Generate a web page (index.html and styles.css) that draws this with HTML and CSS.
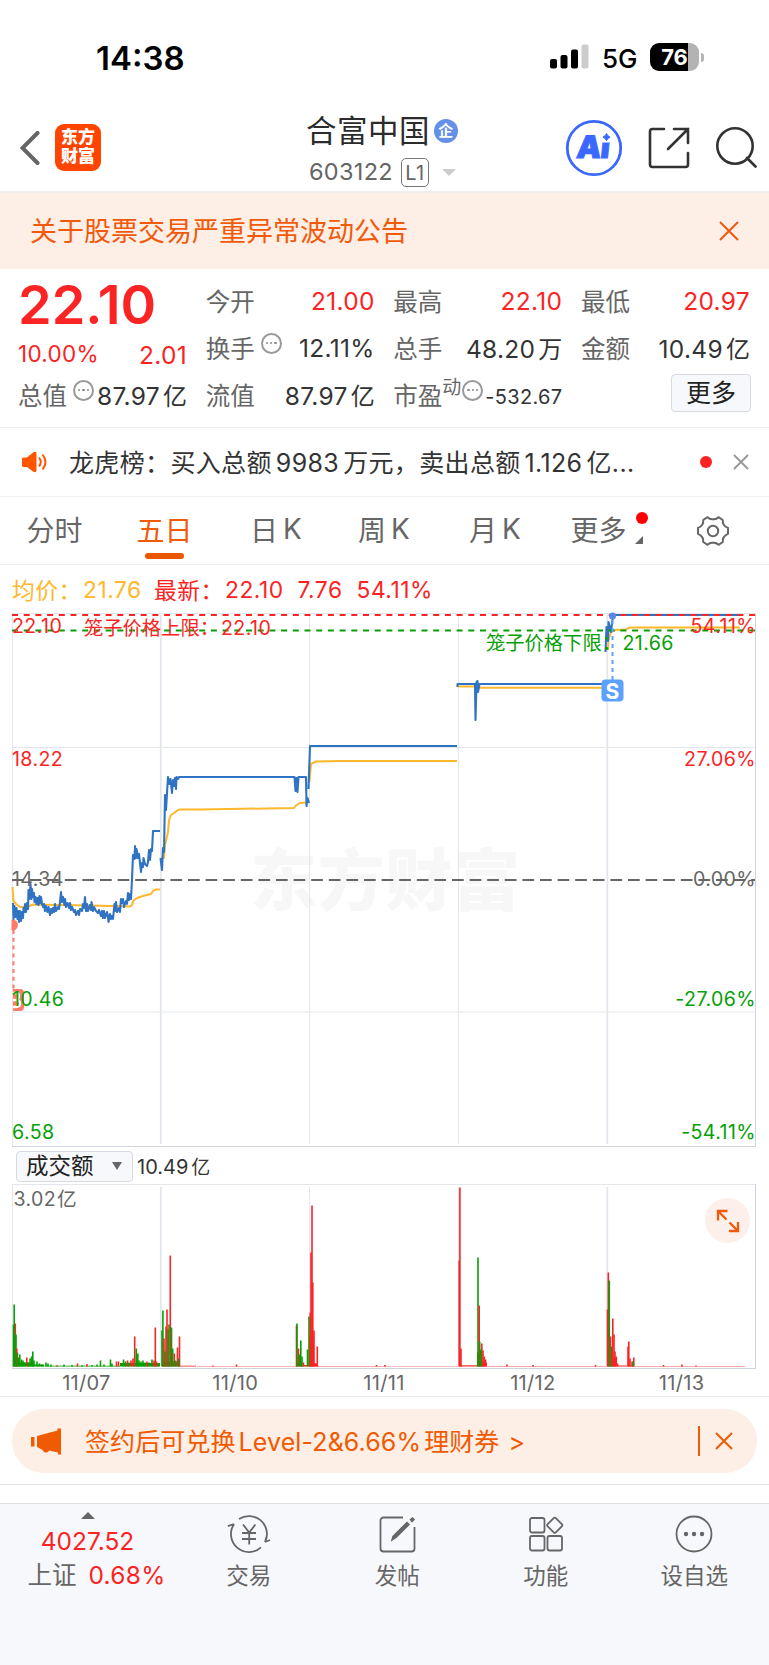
FILE: index.html
```
<!DOCTYPE html>
<html lang="zh-CN">
<head>
    <meta charset="UTF-8">
    <meta name="viewport" content="width=device-width, initial-scale=1.0">
    <title>合富中国 603122</title>
    <link rel="stylesheet" href="styles.css">
</head>
<body>

    <div class="statusbar">
        <span class="time">14:38</span>
        <svg class="signal" width="39" height="26" viewBox="0 0 39 26">
            <rect x="0" y="15" width="7" height="9.5" rx="2"/>
            <rect x="10.5" y="11" width="7" height="13.5" rx="2"/>
            <rect x="21" y="5.500" width="7" height="19" rx="2"/>
            <rect x="31.500" y="0.500" width="7" height="24" rx="2" fill="#ccc"/>
        </svg>
        <span class="network">5G</span>
        <div class="battery"><span>76</span></div>
        <i class="battery-tip"></i>
    </div>

    <header class="header">
        <div class="header-left">
            <svg width="20" height="34" viewBox="0 0 20 34"><path d="M17.500 2 2.500 17l15 15" fill="none" stroke="#666" stroke-width="4" stroke-linecap="round"/></svg>
            <div class="logo">东方<br>财富</div>
        </div>
        <div class="title">
            <div class="name">合富中国<span class="corp">企</span></div>
            <div class="code">603122<span class="level">L1</span><i class="caret"></i></div>
        </div>
        <div class="header-right">
            <svg class="ai" width="58" height="58" viewBox="0 0 58 58">
                <circle cx="29" cy="29" r="26.700" fill="#fff" stroke="#3a68ff" stroke-width="2.800"/>
                <text x="15" y="39.500" textLength="33" transform="skewX(-6)">Ai</text>
                <rect x="35.500" y="12" width="12" height="11.500" fill="#fff"/>
                <path d="M41.500 14.500q1 2.600 3.600 3.600-2.600 1-3.600 3.600-1-2.600-3.600-3.600 2.600-1 3.600-3.600z" fill="#3a68ff" stroke="#3a68ff"/>
            </svg>
            <svg class="share" width="42" height="42" viewBox="0 0 42 42">
                <path d="M16 2H4.500A2.500 2.500 0 0 0 2 4.500v33A2.500 2.500 0 0 0 4.500 40h33a2.500 2.500 0 0 0 2.500-2.500V26M26 2h14v14M40 2 20 22"/>
            </svg>
            <svg class="search" width="42" height="42" viewBox="0 0 42 42">
                <circle cx="20" cy="19" r="17.700"/><path d="m32 31 8.500 8.500"/>
            </svg>
        </div>
    </header>

    <div class="notice">
        <span>关于股票交易严重异常波动公告</span>
        <svg width="20" height="20" viewBox="0 0 20 20"><path d="m1 1 18 18M19 1 1 19" stroke="#f05a0a" stroke-width="2"/></svg>
    </div>

    <section class="quote">
        <div class="col first">
            <div class="price">22.10</div>
            <div class="change"><span>10.00%</span><span class="diff">2.01</span></div>
            <div class="item"><label>总值<i class="more-dot"><b></b><b></b><b></b></i></label><span>87.97<em>亿</em></span></div>
        </div>
        <div class="col">
            <div class="item up"><label>今开</label><span>21.00</span></div>
            <div class="item"><label>换手<i class="more-dot"><b></b><b></b><b></b></i></label><span>12.11%</span></div>
            <div class="item"><label>流值</label><span>87.97<em>亿</em></span></div>
        </div>
        <div class="col">
            <div class="item up"><label>最高</label><span>22.10</span></div>
            <div class="item"><label>总手</label><span>48.20<em>万</em></span></div>
            <div class="item"><label>市盈<sup>动</sup><i class="more-dot tight"><b></b><b></b><b></b></i></label><span class="small">-532.67</span></div>
        </div>
        <div class="col">
            <div class="item up"><label>最低</label><span>20.97</span></div>
            <div class="item"><label>金额</label><span>10.49<em>亿</em></span></div>
            <div class="item end"><button class="btn-more">更多</button></div>
        </div>
    </section>

    <div class="news">
        <svg width="27" height="24" viewBox="0 0 27 24">
            <path d="M2.500 7.500H6l6-5q3.500-2 3.500 1.500v16q0 3.500-3.500 1.500l-6-4.500H2.500Q1 17 1 15.500V9q0-1.500 1.500-1.500z" fill="#ff5500"/>
            <path d="M18 7.500q3.500 4.500 0 9M21.500 4.500q6 7.500 0 15" fill="none" stroke="#ff5500" stroke-width="2"/>
        </svg>
        <p>龙虎榜：买入总额<span>9983</span>万元，卖出总额<span>1.126</span>亿...</p>
        <i class="dot"></i>
        <svg width="16" height="16" viewBox="0 0 16 16"><path d="m1 1 14 14M15 1 1 15" stroke="#999" stroke-width="2"/></svg>
    </div>

    <nav class="tabs">
        <a>分时</a>
        <a class="active">五日</a>
        <a>日<span>K</span></a>
        <a>周<span>K</span></a>
        <a>月<span>K</span></a>
        <a class="tab-more">更多<i class="badge"></i><i class="corner"></i></a>
        <a>
            <svg width="32" height="32" viewBox="0 0 32 32" fill="none" stroke="#666" stroke-width="2">
                <path d="M10.500 2.200Q13 4.700 16 4.200 19 4.700 21.500 2.200L25.800 5Q25 10.500 31 13V18.800Q25 21.500 25.800 27L21.500 29.800Q19 27.300 16 27.800 13 27.300 10.500 29.800L6.200 27Q7 21.500 1 18.800V13Q7 10.500 6.200 5Z" stroke-linejoin="round"/>
                <circle cx="16" cy="16" r="5.200"/>
            </svg>
        </a>
    </nav>

    <div class="legend">
        <span class="avg">均价：</span><span class="avg avg-val">21.76</span>
        <span class="last">最新：</span><span class="last-val">22.10</span><span class="delta">7.76</span><span>54.11%</span>
    </div>

    <svg class="chart" width="769" height="536" viewBox="0 612 769 536">
        <text class="watermark" x="250" y="905" textLength="270">东方财富</text>
        <!-- grid -->
        <g class="grid">
            <path d="M12 613.500H756M12 747.500H755M12 1012H755M12.500 613V1147M309.500 615V1144M458.500 615V1144"/>
            <path d="M160.800 615V1144M607.300 615V1144" stroke-width="1.800"/>
            <path d="M12 1146.500H756M755.500 613V1147" stroke="#d2d5de"/>
        </g>
        <!-- buy marker -->
        <g>
            <path d="M13.500 930V990" stroke="#ff7b69" stroke-width="2" stroke-dasharray="4 3.800"/>
            <path d="M12.500 920.500a4.500 4.500 0 0 1 0 9z" fill="#ff7b69" stroke="#ff7b69" stroke-width="2"/>
            <path d="M13 989h7a4 4 0 0 1 4 4v14a4 4 0 0 1-4 4h-7z" fill="#ff7b69"/>
            <path d="M13 993h3q3 0 3 3.200T16 1000h-3m3 0q4 0 4 3.500t-4 3.500h-3" fill="none" stroke="#fff" stroke-width="2.300"/>
        </g>
        <path class="avg-line" d="M12.500 887 13.500 901 16 904 20 907H27L33 904.500 60 905 90 905.500 110 906 130 906.500 131.500 905.500 134 900 137 898 143 896 151 894 153.500 890.500 156 889.500H160M161 858 164 858 165 845 168 832 169 820 171 815 176 811.500 179 809.500H200L294 808 296 805.500 300 803 306 802.500M309.500 782 311 764 316 761.500 340 761H457M458 686.500H475L479 687.800H606M608 650 608.500 640 611 632 616 629.800H625L630 627.500H740"/>
        <path class="price-line" d="M13 903 13.500 919 14.500 906 15.500 917 16.500 908 17.500 919 18.500 911 19 922 20 911 21 921 22 912 23 918 23.500 908 24.500 912 25 904 26 912 27 903 28 909 28.500 890 29.500 899 30.500 884 31.500 899 32 889 33 897 34 893 34.500 902 35.500 897 36.500 904 37.500 898 38.500 905 39.500 896 40.500 903 41 897 42 904 43 907 44 904 45 911 46 906 47.500 912 48.500 907 50 915 51 909 52 913 53 908 54 912 55 904 56 911 58 907 59 909 60 902 61 892 62 902 63 897 64.500 905 65 899 66 907 67.500 903 69 908 70 903 71 910 72 907 74 912 75 910 76 915 78 911 79 915 80 909 82 911 83 904 84 908 85 897 86 911 87 904 88 911 90 905 91 910 91.500 902 93 911 94 907 96 911 98 913 99 910 101 916 102 911 103 918 104 911 105 918 107 912 108 917 108.500 922 110 914 111 919 112 916 113 919 114.500 904 115 911 116 902 117 912 119 908 120 912 121 899 122 903 123 899 124 907 126 901 127 904 128 893 129 900 130 894 131 899 132 879 133 855 134.500 859 135 846 136 858 136.500 849 138 858 139 854 141 872 142 863 143 867 143.500 858 145 864 147 866 148 862 149 850 150 860 151 849 152 851 153 831H160M160.500 858 162 870 163 848 164 852 165 795 166 810 167 793 168 777 169.500 784 170.500 779 172 793 173 780 174 786 175 778 176 789 176.500 777 178 779 179 777H294.500L295.500 791 296.500 778 297.500 792 298.500 777H306L306.500 806 307.500 798 309 803M308.500 789 310 746H457M457.500 687V684H475L475.500 720 476.500 682 477.500 681 478 692 479.500 684H606M605.500 652 606.500 627 608 641 608.500 622 611 632 613 615H740"/>
        <path d="M12 615H755" class="limit-up"/>
        <path d="M12 630.500H755" class="limit-down"/>
        <path d="M12 880H755" class="zero"/>
        <!-- sell marker -->
        <path d="M612.500 620V680" stroke="#5da1ff" stroke-width="2" stroke-dasharray="4 4"/>
        <circle cx="612.500" cy="616" r="3.500" fill="#5d86e8"/>
        <rect x="601.500" y="679.500" width="22" height="22" rx="4" fill="#5da1ff"/>
        <text class="sell" x="612.500" y="698.500">S</text>
        <g class="red">
            <text x="12" y="632.500">22.10</text>
            <text x="12" y="766">18.22</text>
            <text class="cn" x="84" y="635">笼子价格上限：</text>
            <text x="221" y="635">22.10</text>
            <text class="r" x="756" y="632.500">54.11%</text>
            <text class="r" x="756" y="766">27.06%</text>
        </g>
        <g class="gray">
            <text x="12" y="885.500">14.34</text>
            <text class="r" x="756" y="885.500">0.00%</text>
        </g>
        <g class="green">
            <text x="12" y="1006">10.46</text>
            <text x="12" y="1139">6.58</text>
            <text class="cn" x="486" y="650">笼子价格下限：</text>
            <text x="622.500" y="650">21.66</text>
            <text class="r" x="756" y="1006">-27.06%</text>
            <text class="r" x="756" y="1139">-54.11%</text>
        </g>
    </svg>

    <div class="indicator">
        <button class="select">成交额<i></i></button>
        <span>10.49<em>亿</em></span>
    </div>

    <div class="volume">
        <svg width="769" height="186" viewBox="0 1183 769 186">
            <g class="grid">
                <path d="M12 1184.500H756M12.500 1184V1368M309.500 1187V1366M458.500 1187V1366"/>
                <path d="M160.800 1187V1366M607.300 1187V1366" stroke-width="1.800"/>
                <path d="M12 1368.500H756M755.500 1184V1368" stroke="#ccd3da"/>
            </g>
            <g id="bars"></g>
            <g class="gray"><text x="13.500" y="1206">3.02</text><text x="57" y="1206">亿</text></g>
        </svg>
        <button class="expand">
            <svg width="24" height="24" viewBox="0 0 24 24" fill="none" stroke="#f05a0a" stroke-width="2.300">
                <path d="M11.500 2H2v9.500M2 2l8.500 8.500M13 22h9v-9M22 22l-8.500-8.500"/>
            </svg>
        </button>
    </div>
    <div class="dates"><span>11/07</span><span>11/10</span><span>11/11</span><span>11/12</span><span>11/13</span></div>

    <div class="promo-wrap">
        <div class="promo">
            <svg width="31" height="27" viewBox="0 0 31 27" fill="#f05a00">
                <path d="M0 9h3.500v9.500H0zM6 8 26.500 2.500V0.500H30v26h-3v-2L18 22.500q-1 3-5 1.500l-2-2.500L6 19z"/>
            </svg>
            <p>签约后可兑换<span>Level-2&amp;6.66%</span>理财券<b>&gt;</b></p>
            <i class="line"></i>
            <svg width="18" height="18" viewBox="0 0 18 18"><path d="m1 1 16 16M17 1 1 17" stroke="#f05a00" stroke-width="2"/></svg>
        </div>
    </div>

    <footer class="toolbar">
        <div class="index">
            <i class="up-arrow"></i>
            <div class="index-val">4027.52</div>
            <div class="index-name">上证<span>0.68%</span></div>
        </div>
        <a>
            <svg width="44" height="38" viewBox="0 0 44 38">
                <path d="M12 4A18 18 0 0 1 38.500 26M38 27l1.500-5M38 27l5-2M34 32.400A18 18 0 0 1 7 9M7 9 .8 11.200M7 9 5 13"/>
                <path d="m16 9.500 6.200 8 6.200-8M15 18h14M15 24h14M22.200 17.500v12"/>
            </svg>
            <span>交易</span>
        </a>
        <a>
            <svg width="38" height="38" viewBox="0 0 38 38">
                <path d="M25 2.500H5.500a3 3 0 0 0-3 3v28a3 3 0 0 0 3 3h28a3 3 0 0 0 3-3V12"/>
                <path d="M14 25 15 21.500 29 7.500l2 2L18 22.500zM32.500 4.500l2-1.500 1.500 1.500L34 6.500z" fill="#666" stroke-width="1.500"/>
            </svg>
            <span>发帖</span>
        </a>
        <a>
            <svg width="36" height="38" viewBox="0 0 36 38">
                <rect x="2" y="3" width="14.500" height="14.500" rx="2"/>
                <rect x="2" y="21" width="14.500" height="14.500" rx="2"/>
                <rect x="19.500" y="21" width="14.500" height="14.500" rx="2"/>
                <rect x="21" y="4.500" width="11.500" height="11.500" rx="1.500" transform="rotate(45 26.750 10.250)"/>
            </svg>
            <span>功能</span>
        </a>
        <a>
            <svg width="38" height="38" viewBox="0 0 38 38">
                <circle cx="19" cy="19" r="17.500"/>
                <g fill="#666" stroke="none"><circle cx="11" cy="19" r="2.200"/><circle cx="19" cy="19" r="2.200"/><circle cx="27" cy="19" r="2.200"/></g>
            </svg>
            <span>设自选</span>
        </a>
    </footer>

    <script>
        const base = 1366.5;
        const red = '#fa2424';
        const green = '#06a006';

        // [x, alto, color]
        const bars = [
            [13.5, 42, green], [15.3, 43, red], [14.2, 62, green], [16, 32, green], [16.8, 18, red], [17.4, 14, green],
            [18.5, 9, green], [19.8, 12, green], [21.5, 7, green], [23, 6, green], [24.5, 4, green], [26.8, 9, red],
            [28, 4, green], [30, 8, green], [31.5, 10, green], [32.8, 15, green], [34, 6, green], [37, 5, green],
            [39.5, 3, green], [42, 2, green], [46, 4, green], [48, 3, green], [51, 2, green], [57, 1.2, red],
            [64, 2, green], [72, 1.5, green], [77.5, 3, red], [82, 1.3, green], [87, 2.5, red], [92, 1.5, green],
            [97, 2, green], [100.5, 6, green], [104, 2, green], [110.5, 7, green], [112, 3, green], [116.5, 5, red],
            [118.5, 5, red], [123.5, 7, green], [125.5, 5, green], [127.5, 6, red], [129, 4, green], [131, 6, red],
            [133, 8, red], [134.7, 30, red], [136.3, 18, green], [137.8, 13, green], [139, 6, green], [141, 5, green],
            [143, 6, green], [145, 4, green], [147, 5, red], [149, 4, green], [152, 7, green], [154, 6, red],
            [155.3, 39, red], [156.5, 5, red], [158, 2, green],
            [162, 36, green], [162.9, 56, green], [164, 28, red], [165, 15, green], [167, 57, red], [166, 40, red],
            [168, 37, green], [169, 42, green], [170.3, 111, red], [171.5, 39, green], [172.7, 18, green],
            [174.3, 13, red], [175.5, 6, green], [177.5, 19, red], [179.5, 30, red], [178.5, 8, green],
            [213, 1, red], [236.5, 2, red],
            [296.5, 41, red], [297, 43, green], [298.5, 18, red], [299.5, 12, green], [300.8, 26, green],
            [302, 10, green], [303.5, 4, red], [307.5, 17, green], [309, 50, green], [310.3, 54, red],
            [311, 114, red], [312, 161, red], [312.8, 84, red], [314, 36, red], [315.5, 3, red], [317.3, 20, red],
            [376.5, 1.5, red], [385, 1.5, red],
            [459.2, 106, red], [459.9, 179, red], [461, 18, red],
            [478, 109, green], [479.2, 61, red], [479.7, 25, green], [481.8, 23, red], [480.8, 17, green],
            [483, 16, red], [484.3, 10, red], [485.5, 7, red], [507, 2, red], [533, 1.5, red], [595.5, 1.5, red],
            [607.5, 57, red], [608.3, 94, red], [609.3, 86, green], [610.5, 30, red], [611.8, 20, green],
            [612.8, 48, red], [614, 32, red], [615, 15, red], [616.3, 10, red], [617.5, 3, red],
            [628, 20, red], [628.8, 25, red], [630, 8, red], [632, 5, red], [633.8, 9, red], [633, 5, green],
            [663.5, 1.5, red], [682, 2, red], [696, 1, red]
        ];

        // fondo de volumen bajo: [desde, hasta, color, alto]
        const flats = [
            [13, 34, green, 4], [34, 44, green, 2], [44, 120, green, 0.8], [120, 160, green, 3.5], [162, 180, green, 5],
            [180, 196, red, 0.8], [197, 296, red, 0.35], [296, 302, green, 4], [302, 309, red, 1.5], [309, 314, red, 30],
            [314, 318, red, 3], [318, 385, red, 0.4], [385, 458, red, 0.3], [460, 477, red, 1.2], [477, 482, green, 14],
            [482, 487, red, 4], [487, 606, red, 0.4], [607, 613, green, 17], [613, 616, red, 9], [616, 634, red, 1],
            [634, 745, red, 0.4]
        ];

        let html = '';
        flats.forEach(f => {
            html += `<rect x="${f[0]}" y="${base - f[3]}" width="${f[1] - f[0]}" height="${f[3]}" fill="${f[2]}"/>`;
        });
        bars.forEach(b => {
            html += `<rect x="${b[0] - 0.8}" y="${base - b[1]}" width="1.6" height="${b[1]}" fill="${b[2]}"/>`;
        });
        document.getElementById('bars').innerHTML = html;
    </script>

</body>
</html>
```
FILE: styles.css
```
* {
    box-sizing: border-box;
}
body {
    font-family: Inter, "Noto Sans CJK SC", sans-serif;
    background: white;
    color: #333;
    margin: 0;
    width: 769px;
    height: 1665px;
    overflow: hidden;
    display: flex;
    flex-direction: column;
}
p {
    margin: 0;
}
i, em {
    font-style: normal;
}
button {
    font-family: inherit;
    padding: 0;
    cursor: pointer;
}
svg {
    display: block;
    flex: none;
}

/* status bar */
.statusbar {
    height: 96px;
    padding: 18px 65px 0 96px;
    display: flex;
    align-items: center;
    color: black;
}
.time {
    font-size: 33px;
    font-weight: 600;
    flex: 1;
    padding-top: 2px;
}
.signal {
    margin-right: 13px;
}
.network {
    font-size: 26px;
    font-weight: 500;
    width: 48px;
    padding-top: 2px;
}
.battery {
    width: 49px;
    height: 28px;
    border-radius: 9px;
    background: linear-gradient(to right, black 38px, #b3b3b3 38px);
    color: white;
    font-size: 22px;
    font-weight: 700;
    line-height: 28px;
    text-align: center;
}
.battery-tip {
    width: 3px;
    height: 9px;
    margin-left: 2px;
    background: #b3b3b3;
    border-radius: 0 4px 4px 0;
}

/* header */
.header {
    height: 97px;
    display: grid;
    grid-template-columns: 306px 1fr auto;
    border-bottom: 2px solid #eee;
}
.header-left {
    display: flex;
    align-items: center;
    padding: 8px 0 0 20px;
    gap: 15px;
}
.header-left svg {
    margin-top: 1px;
}
.logo {
    width: 46px;
    height: 47px;
    border-radius: 9px;
    background: #ff4400;
    color: white;
    font-size: 17px;
    font-weight: 900;
    line-height: 19px;
    padding-top: 4px;
    text-align: center;
}
.name {
    display: flex;
    align-items: center;
    font-size: 30.5px;
    letter-spacing: 0.5px;
    line-height: 40px;
    margin-top: 15px;
    color: #2b2b2b;
}
.corp {
    width: 24px;
    height: 24px;
    border-radius: 50%;
    background: #6590e8;
    color: white;
    font-size: 15px;
    font-weight: 700;
    line-height: 23px;
    text-align: center;
    margin-left: 4px;
}
.code {
    display: flex;
    align-items: center;
    font-size: 23.5px;
    letter-spacing: 0.3px;
    line-height: 30px;
    margin: 6px 0 0 3px;
    color: #666;
}
.level {
    border: 1px solid #777;
    border-radius: 5px;
    width: 28px;
    height: 29px;
    font-size: 20px;
    line-height: 28px;
    text-align: center;
    margin-left: 8px;
}
.caret {
    border: 7px solid transparent;
    border-top-color: #ccc;
    border-bottom: 0;
    margin-left: 13px;
}
.header-right {
    display: flex;
    align-items: center;
    padding: 8px 12px 0 0;
}
.ai {
    margin-right: 25px;
}
.ai text {
    font-size: 31px;
    font-weight: 900;
    fill: #3a68ff;
    stroke: #3a68ff;
}
.share, .search {
    fill: none;
    stroke: #333;
    stroke-width: 2.6;
    stroke-linecap: round;
}
.share {
    margin-right: 25px;
}

.notice {
    height: 76px;
    background: #fdeee6;
    color: #f05a0a;
    display: flex;
    align-items: center;
    justify-content: space-between;
    padding: 0 30px 0 30px;
    font-size: 27px;
}
.notice span {
    margin-top: -4px;
}

/* quote */
.quote {
    height: 159px;
    padding: 8px 19px 0 18px;
    display: grid;
    grid-template-columns: repeat(4, 169px);
    justify-content: space-between;
    border-bottom: 1px solid #eee;
}
.item {
    height: 47px;
    display: flex;
    align-items: center;
    justify-content: space-between;
    font-size: 24.5px;
}
.item > span {
    letter-spacing: 0.3px;
    white-space: nowrap;
}
.item label {
    display: flex;
    align-items: center;
    font-size: 24.5px;
    color: #666;
    white-space: nowrap;
}
.item em {
    margin-left: 3px;
    font-size: 24px;
    letter-spacing: 0;
}
.up {
    color: #fa2424;
}
.price {
    color: #fa2424;
    font-size: 54px;
    font-weight: 600;
    line-height: 55px;
}
.change {
    height: 39px;
    padding-top: 4px;
    display: flex;
    align-items: center;
    justify-content: space-between;
    color: #fa2424;
    font-size: 22.5px;
    letter-spacing: 0.3px;
}
.diff {
    font-size: 24.5px;
    padding-top: 2px;
}
.more-dot {
    width: 21px;
    height: 21px;
    border: 2px solid #999;
    border-radius: 50%;
    display: flex;
    align-items: center;
    justify-content: center;
    gap: 2px;
    margin: -9px 0 0 6px;
}
.more-dot b {
    width: 2.4px;
    height: 2.4px;
    border-radius: 50%;
    background: #888;
}
.more-dot.tight {
    margin-left: 1px;
}
.item sup {
    font-size: 19px;
    line-height: 20px;
    margin: -13px 0 0 0;
}
.item .small {
    font-size: 20px;
    padding-top: 5px;
}
.item.end {
    justify-content: flex-end;
}
.btn-more {
    width: 80px;
    height: 38px;
    margin: -4px -1px 0 0;
    border: 1px solid #d8dae2;
    border-radius: 4px;
    background: #f7f8fb;
    color: #222;
    font-size: 25px;
    line-height: 36px;
}

/* news */
.news {
    height: 69px;
    display: flex;
    align-items: center;
    padding: 0 20px 0 21px;
    border-bottom: 1px solid #f2f2f2;
    font-size: 25px;
}
.news p {
    flex: 1;
    margin: -2px 0 0 21px;
    letter-spacing: 0.35px;
    white-space: nowrap;
}
.news p span {
    margin: 0 4px;
}
.dot {
    width: 12px;
    height: 12px;
    border-radius: 50%;
    background: #fa2424;
    margin-right: 21px;
}

/* tabs */
.tabs {
    height: 68px;
    display: grid;
    grid-template-columns: 109px 111px 112px 104px 118px 105px 1fr;
    border-bottom: 1px solid #eee;
    font-size: 28px;
    color: #666;
}
.tabs a {
    display: flex;
    align-items: center;
    justify-content: center;
    position: relative;
    padding-bottom: 4px;
}
.tabs a:last-child {
    padding: 0 2px 0 0;
}
.tabs a span {
    margin-left: 5px;
}
.tabs .active {
    color: #f05a0a;
}
.tabs .active::after {
    content: "";
    position: absolute;
    bottom: 5px;
    width: 39px;
    height: 6px;
    border-radius: 3px;
    background: #eb5600;
}
.tabs .tab-more {
    padding-right: 16px;
}
.badge {
    position: absolute;
    left: 82px;
    top: 15px;
    width: 12px;
    height: 12px;
    border-radius: 50%;
    background: #ff0000;
}
.corner {
    position: absolute;
    left: 81px;
    top: 39px;
    border-left: 8px solid transparent;
    border-bottom: 8px solid #666;
}

/* chart */
.legend {
    height: 47px;
    padding: 1px 12px 0;
    display: flex;
    align-items: center;
    font-size: 22.8px;
    letter-spacing: 0.5px;
    color: #fa2424;
}
.avg {
    color: #ffb72b;
}
.avg, .last {
    width: 71px;
    white-space: nowrap;
}
.last-val, .delta {
    margin-right: 14px;
}
.grid {
    fill: none;
    stroke: #e3e6ed;
}
.price-line, .avg-line {
    fill: none;
    stroke: #2f73c2;
    stroke-width: 2.1;
    stroke-linejoin: round;
}
.avg-line {
    stroke: #ffb72b;
    stroke-width: 2;
}
.limit-up {
    stroke: #fa2424;
    stroke-width: 1.8;
    stroke-dasharray: 6 5.7;
}
.limit-down {
    stroke: #06a006;
    stroke-width: 1.8;
    stroke-dasharray: 6 5.7;
}
.zero {
    stroke: #666;
    stroke-width: 2;
    stroke-dasharray: 11.7 5.9;
}
.chart text, .volume text {
    font-size: 19.6px;
    letter-spacing: 0.4px;
}
.chart .cn {
    font-size: 19.3px;
    letter-spacing: 0;
}
.chart .r {
    text-anchor: end;
}
.chart .watermark {
    font-size: 67px;
    font-weight: 900;
    letter-spacing: 0;
    fill: #f7f7f7;
}
.chart .sell {
    font-size: 21px;
    font-weight: 700;
    letter-spacing: 0;
    fill: white;
    text-anchor: middle;
}
.red {
    fill: #fa2424;
}
.gray {
    fill: #666;
}
.green {
    fill: #06a006;
}

.indicator {
    height: 35px;
    display: flex;
    align-items: center;
    padding: 1px 16px 0;
    gap: 4px;
    font-size: 20px;
}
.indicator span {
    margin-top: -1px;
}
.indicator em {
    margin-left: 3px;
    font-size: 19px;
}
.select {
    width: 117px;
    height: 31px;
    border: 1px solid #d8dae2;
    border-radius: 4px;
    background: #f7f8fb;
    color: #222;
    font-size: 22.5px;
    line-height: 28px;
    display: flex;
    align-items: center;
    justify-content: space-between;
    padding: 0 10px 0 9px;
}
.select i {
    border: 5px solid transparent;
    border-top: 8px solid #666;
    border-bottom: 0;
}
.volume {
    position: relative;
}
.expand {
    position: absolute;
    left: 705px;
    top: 15px;
    width: 45px;
    height: 45px;
    border: 0;
    border-radius: 50%;
    background: #fdf0ea;
    display: flex;
    align-items: center;
    justify-content: center;
}
.dates {
    height: 28px;
    padding: 1px 13px 0 12px;
    display: flex;
    align-items: center;
    font-size: 20px;
    letter-spacing: 0.3px;
    color: #666;
    border-bottom: 1px solid #e8e8ec;
}
.dates span {
    flex: 1;
    text-align: center;
}

/* promo */
.promo-wrap {
    height: 88px;
    padding: 12px 12px 0;
    border-bottom: 1px solid #e3e4ec;
}
.promo {
    height: 64px;
    border-radius: 32px;
    background: #fdeee6;
    color: #f05a00;
    display: flex;
    align-items: center;
    padding: 0 24px 0 19px;
    font-size: 25px;
}
.promo p {
    flex: 1;
    margin: -3px 0 0 23px;
    letter-spacing: 0.1px;
    white-space: nowrap;
}
.promo p span {
    margin: 0 3px;
}
.promo p b {
    font-weight: 400;
    margin-left: 9px;
}
.line {
    width: 2px;
    height: 30px;
    background: #f05a00;
    margin-right: 15px;
}

/* toolbar */
.toolbar {
    flex: 1;
    margin-top: 18px;
    border-top: 1px solid #dddfe3;
    background: #f7f8fb;
    display: grid;
    grid-template-columns: 175px repeat(4, 1fr);
    color: #666;
}
.toolbar a {
    display: flex;
    flex-direction: column;
    align-items: center;
    padding: 11px 1px 0 0;
    font-size: 22.5px;
    line-height: 30px;
}
.toolbar a svg {
    fill: none;
    stroke: #666;
    stroke-width: 1.8;
}
.toolbar a span {
    margin-top: 8px;
}
.index {
    display: flex;
    flex-direction: column;
    align-items: center;
}
.up-arrow {
    border: 7px solid transparent;
    border-bottom-color: #666;
    border-top: 0;
    margin-top: 8px;
}
.index-val {
    font-size: 24.5px;
    line-height: 30px;
    color: #fa2424;
    margin-top: 7px;
}
.index-name {
    font-size: 24.5px;
    line-height: 34px;
    margin: 2px 0 0 18px;
}
.index-name span {
    color: #fa2424;
    letter-spacing: 0.3px;
    margin-left: 12px;
}
```
